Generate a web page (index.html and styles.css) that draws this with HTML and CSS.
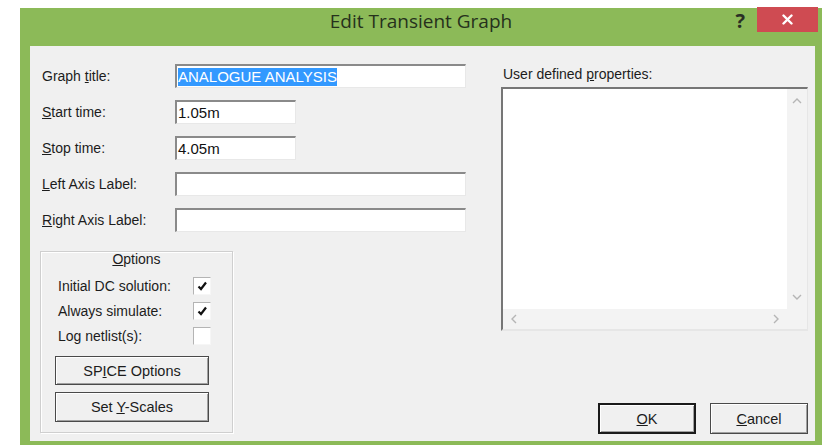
FILE: index.html
```html
<!DOCTYPE html>
<html lang="en">
<head>
<meta charset="utf-8">
<title>Edit Transient Graph</title>
<link rel="stylesheet" href="styles.css">
</head>
<body>
<div class="window">
  <div class="titlebar">
    <div></div>
    <div class="title">Edit Transient Graph</div>
    <div class="caption-buttons">
      <span class="help">?</span>
      <span class="close">
        <svg width="11" height="11" viewBox="0 0 11 11"><path d="M1.5 1.5 L9.5 9.5 M9.5 1.5 L1.5 9.5" stroke="#fff" stroke-width="2.4" stroke-linecap="round"/></svg>
      </span>
    </div>
  </div>

  <div class="client">
    <div class="left-col">
      <div class="row">
        <span class="lbl">Graph <u>t</u>itle:</span>
        <div class="edit wide"><span class="sel">ANALOGUE ANALYSIS</span></div>
      </div>
      <div class="row">
        <span class="lbl"><u>S</u>tart time:</span>
        <div class="edit short"><span class="val">1.05m</span></div>
      </div>
      <div class="row">
        <span class="lbl"><u>S</u>top time:</span>
        <div class="edit short"><span class="val">4.05m</span></div>
      </div>
      <div class="row">
        <span class="lbl"><u>L</u>eft Axis Label:</span>
        <div class="edit wide"></div>
      </div>
      <div class="row">
        <span class="lbl"><u>R</u>ight Axis Label:</span>
        <div class="edit wide"></div>
      </div>

      <div class="options">
        <div class="group-title"><u>O</u>ptions</div>
        <div class="check-row">
          <span class="check-lbl">Initial DC solution:</span>
          <span class="check"><svg width="12" height="12" viewBox="0 0 12 12"><path d="M2.5 6.5 L5 9 L10 2.5" fill="none" stroke="#111" stroke-width="2.2"/></svg></span>
        </div>
        <div class="check-row">
          <span class="check-lbl">Always simulate:</span>
          <span class="check"><svg width="12" height="12" viewBox="0 0 12 12"><path d="M2.5 6.5 L5 9 L10 2.5" fill="none" stroke="#111" stroke-width="2.2"/></svg></span>
        </div>
        <div class="check-row">
          <span class="check-lbl">Log netlist(s):</span>
          <span class="check"></span>
        </div>
        <div class="btn group-btn first"><span>SP<u>I</u>CE Options</span></div>
        <div class="btn group-btn"><span>Set <u>Y</u>-Scales</span></div>
      </div>
    </div>

    <div class="right-col">
      <div class="lbl list-lbl">User defined <u>p</u>roperties:</div>
      <div class="listbox">
        <div class="list-area"></div>
        <div class="vscroll">
          <svg width="10" height="6" viewBox="0 0 10 6"><path d="M1 5 L5 1 L9 5" fill="none" stroke="#b5b5b5" stroke-width="1.4"/></svg>
          <svg width="10" height="6" viewBox="0 0 10 6"><path d="M1 1 L5 5 L9 1" fill="none" stroke="#b5b5b5" stroke-width="1.4"/></svg>
        </div>
        <div class="hscroll">
          <svg width="6" height="10" viewBox="0 0 6 10"><path d="M5 1 L1 5 L5 9" fill="none" stroke="#b5b5b5" stroke-width="1.4"/></svg>
          <svg width="6" height="10" viewBox="0 0 6 10"><path d="M1 1 L5 5 L1 9" fill="none" stroke="#b5b5b5" stroke-width="1.4"/></svg>
        </div>
        <div class="corner"></div>
      </div>
      <div class="dialog-buttons">
        <div class="btn default"><span><u>O</u>K</span></div>
        <div class="btn"><span><u>C</u>ancel</span></div>
      </div>
    </div>
  </div>
</div>
</body>
</html>
```

FILE: styles.css
```css
html, body {
  margin: 0;
  padding: 0;
}

body {
  width: 829px;
  height: 446px;
  overflow: hidden;
  background: #ffffff;
}

/* Window frame */
.window {
  box-sizing: border-box;
  width: 802px;
  height: 437px;
  margin: 8px 0 0 20px;
  padding: 0 7px 4px 10px;
  background: #8cba58;
  display: flex;
  flex-direction: column;
}

.titlebar {
  height: 38px;
  margin: 0 -7px 0 -10px;
  display: grid;
  grid-template-columns: 1fr auto 1fr;
  align-items: start;
}

.title {
  font-family: "Open Sans", "Noto Sans", sans-serif;
  font-size: 19px;
  line-height: 27px;
  color: #26311c;
  white-space: nowrap;
}

.caption-buttons {
  display: flex;
  justify-content: flex-end;
  align-items: flex-start;
}

.help {
  font-family: "Open Sans", "Noto Sans", sans-serif;
  font-weight: 700;
  font-size: 20px;
  line-height: 26px;
  color: #2a2f25;
  margin-right: 12px;
}

.close {
  width: 61px;
  height: 25px;
  margin-top: -1px;
  margin-right: 4px;
  background: #cf4b52;
  display: flex;
  align-items: center;
  justify-content: center;
}

/* Client area */
.client {
  flex: 1;
  background: #f0f0f0;
  display: flex;
  font-family: "Liberation Sans", Arial, sans-serif;
  font-size: 14px;
  color: #1c1c1c;
}

u {
  text-underline-offset: 1px;
}

.left-col {
  box-sizing: border-box;
  width: 471px;
  padding: 18px 0 0 10px;
  display: flex;
  flex-direction: column;
  gap: 12px;
}

.row {
  height: 24px;
  display: flex;
  align-items: center;
}

.lbl {
  box-sizing: border-box;
  width: 135px;
  padding-left: 2px;
  white-space: nowrap;
}

/* Sunken edit box */
.edit {
  box-sizing: border-box;
  height: 24px;
  padding: 1px 1px 0 1px;
  background: #ffffff;
  border-style: solid;
  border-width: 2px 1px 1px 2px;
  border-color: #8a8a8a #e8e8e8 #e8e8e8 #8a8a8a;
  font-size: 15px;
  line-height: 19px;
  color: #111;
  white-space: nowrap;
  overflow: hidden;
}

.edit.wide { width: 291px; }
.edit.short { width: 121px; }

.sel {
  display: inline-block;
  height: 18px;
  line-height: 18px;
  margin-top: 1px;
  background: #3399ff;
  color: #ffffff;
}

.val {
  display: inline-block;
  line-height: 19px;
}

/* Options group box */
.options {
  box-sizing: border-box;
  width: 193px;
  height: 182px;
  margin-top: 7px;
  padding: 0 0 0 14px;
  border: 1px solid #cfcfcf;
  box-shadow: 1px 1px 0 #ffffff, inset 1px 1px 0 #ffffff;
  display: flex;
  flex-direction: column;
}

.group-title {
  line-height: 14px;
  margin-top: 0;
  margin-left: -14px;
  text-align: center;
  height: 21px;
}

.check-row {
  height: 25px;
  display: flex;
  align-items: center;
}

.check-lbl {
  box-sizing: border-box;
  width: 138px;
  padding-left: 3px;
  white-space: nowrap;
}

.check {
  box-sizing: border-box;
  width: 18px;
  height: 18px;
  background: #ffffff;
  border-style: solid;
  border-width: 1px;
  border-color: #b4b4b4 #f6f6f6 #f6f6f6 #b4b4b4;
  display: flex;
  align-items: center;
  justify-content: center;
}

/* Push buttons */
.btn {
  box-sizing: border-box;
  display: flex;
  align-items: center;
  justify-content: center;
  background: #f0f0f0;
  border: 1px solid #4a4a4a;
  box-shadow: inset 1px 1px 0 #ffffff, inset -1px -1px 0 #a0a0a0;
  font-size: 14.5px;
  color: #1c1c1c;
  white-space: nowrap;
}

.group-btn {
  width: 154px;
  height: 29px;
}

.group-btn.first {
  margin-top: 8px;
  margin-bottom: 7px;
}

.group-btn + .group-btn {
  height: 30px;
}

/* Right column */
.right-col {
  box-sizing: border-box;
  width: 307px;
  padding: 20px 0 7px 0;
  display: flex;
  flex-direction: column;
}

.list-lbl {
  width: auto;
  line-height: 16px;
}

.listbox {
  box-sizing: border-box;
  height: 244px;
  margin-top: 5px;
  border-style: solid;
  border-width: 2px 1px 2px 2px;
  border-color: #767676 #e6e6e6 #e6e6e6 #767676;
  display: grid;
  grid-template-columns: 1fr 20px;
  grid-template-rows: 1fr 20px;
  background: #f3f3f3;
}

.list-area {
  background: #ffffff;
}

.vscroll {
  display: flex;
  flex-direction: column;
  align-items: center;
  justify-content: space-between;
  padding: 9px 0 9px 0;
  background: #f3f3f3;
}

.hscroll {
  display: flex;
  align-items: center;
  justify-content: space-between;
  padding: 0 8px 0 8px;
  background: #f3f3f3;
}

.corner {
  background: #f3f3f3;
}

.dialog-buttons {
  margin-top: auto;
  display: flex;
  justify-content: flex-end;
  gap: 14px;
}

.dialog-buttons .btn {
  width: 98px;
  height: 31px;
}

.btn.default {
  border: 2px solid #1a1a1a;
  box-shadow: inset 1px 1px 0 #ffffff, inset -1px -1px 0 #a0a0a0;
}
```
